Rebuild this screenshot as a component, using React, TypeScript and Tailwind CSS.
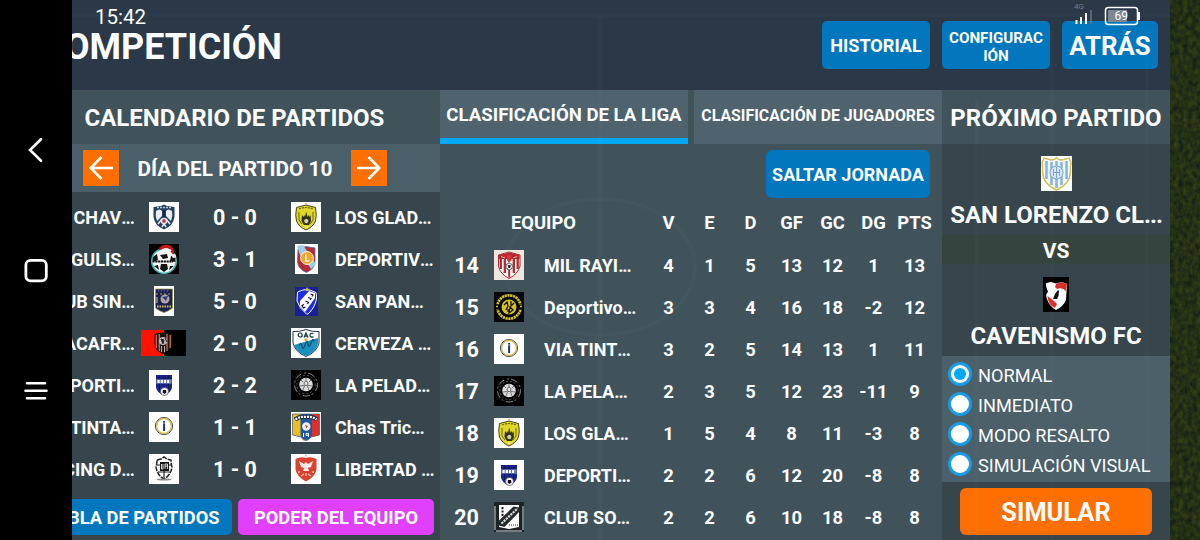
import React from "react";

type CrestName =
  | "chav" | "santa" | "sin" | "bacafr" | "deportivo" | "tinta" | "racing"
  | "glad" | "lanus" | "sanpan" | "oac" | "pelada" | "chas" | "libertad"
  | "rayi" | "dorado" | "solis" | "lorenzo" | "caven";

function Art({ name }: { name: CrestName }) {
  switch (name) {
    case "chav":
      return (
        <>
          <rect width="30" height="30" fill="#fff" />
          <path d="M15 2.500 L18 4 L25.500 5 V15 Q24 24 15 27.500 Q6 24 4.500 15 V5 L12 4 Z" fill="#24405f" />
          <path d="M7 9 Q11 6 13 9 V14 L8 19 Q6 14 7 9 Z M23 9 Q19 6 17 9 V14 L22 19 Q24 14 23 9 Z" fill="#e8eef2" />
          <path d="M8 5.500 H22" stroke="#b9c9d6" strokeWidth="1.500" strokeDasharray="2 1" />
          <path d="M9 22 L13 17 M21 22 L17 17 M13 25 L15 22 L17 25" stroke="#e5eaf0" strokeWidth="1.600" />
          <circle cx="15" cy="19" r="3.200" fill="#e8eef2" />
          <circle cx="15" cy="19" r="1.900" fill="#c63a4c" />
          <path d="M14 8 H16 V15 H14 Z" fill="#16293f" />
        </>
      );
    case "santa":
      return (
        <>
          <rect width="30" height="30" fill="#050505" />
          <circle cx="15" cy="17" r="12.300" fill="#f5f5f5" stroke="#3cb7b0" strokeWidth="1.600" />
          <path d="M11 11 L18 10 L19 14 L14 15 Z M4 13 L8 10 L9 16 L3.500 18 Z M26 13 L22 12 L21 17 L26.500 18 Z M12 20 L18 20 L19 25 L15 28 L11 25 Z M5 22 L9 21 L10 26 Z M25 22 L21 22 L20 26 Z" fill="#151515" />
          <path d="M3.500 17.500 H24" stroke="#111" strokeWidth="2" strokeDasharray="2.200 .6" />
          <path d="M10 6 Q13 0 20 1 Q26 3 25 12 L22 8 Q16 3 10 8 Z" fill="#c4161c" />
          <path d="M10 8 Q16 3 22 7" stroke="#fff" strokeWidth="2.200" fill="none" />
          <path d="M11 5 Q16 0 22 4" stroke="#c4161c" strokeWidth="3" fill="none" />
          <circle cx="25" cy="12" r="2" fill="#eee" />
        </>
      );
    case "sin":
      return (
        <>
          <rect width="20" height="30" fill="#fff" />
          <path d="M1.500 3 H18.500 V22 Q15 25 10 26.500 Q5 25 1.500 22 Z" fill="#1b2250" stroke="#9b9a50" strokeWidth=".8" />
          <path d="M2 8 H18" stroke="#d5c94b" strokeWidth=".8" strokeDasharray="2 2" />
          <circle cx="11" cy="13" r="4.500" fill="#b3a5a0" />
          <path d="M8 11 L14 10 L12 15 Z" fill="#2d3a90" />
          <path d="M3 20.500 H17" stroke="#d5c94b" strokeWidth="2" strokeDasharray="1.500 1" />
          <path d="M4 5 H16" stroke="#7585b8" strokeWidth="1.200" strokeDasharray="1 2" />
          <path d="M3 11 V17" stroke="#e0d66a" strokeWidth="1" />
        </>
      );
    case "bacafr":
      return (
        <>
          <rect width="45" height="26" fill="#000" />
          <rect width="23" height="26" fill="#ff1200" />
          <path d="M13.500 4 Q22 1 31 4 V14 Q30 21 22 24 Q14 21 13.500 14 Z" fill="#181818" />
          <path d="M15.300 5 V18 M18.300 4 V21 M26 4 V21 M29.200 5 V18" stroke="#cf6a60" strokeWidth="1.300" />
          <circle cx="22" cy="11" r="4" fill="#bbb" />
          <path d="M20 9 L23 10 L22 14 Z M24 8 L26 12" stroke="#222" fill="#222" />
          <path d="M20.500 16 V22 M23.500 16 V22" stroke="#c2b0a5" strokeWidth="1" />
        </>
      );
    case "deportivo":
      return (
        <>
          <rect width="30" height="30" fill="#fff" />
          <path d="M7 5 H23 V17 Q23 22 15 25.500 Q7 22 7 17 Z" fill="#1a2590" />
          <path d="M10.500 5 V20 M15 5 V20 M19.500 5 V20 M7 8 H23" stroke="#10174f" strokeWidth=".9" />
          <rect x="7" y="9" width="16" height="5" fill="#5064ae" />
          <path d="M8.500 11.500 H21.500" stroke="#fff" strokeWidth="2.800" strokeDasharray="2.200 1" />
          <circle cx="15.500" cy="21.500" r="4" fill="#fff" stroke="#333" strokeWidth=".6" />
          <path d="M14 20 L17 20 L17.500 22.500 L15.500 24 L13.500 22.500 Z" fill="#111" />
        </>
      );
    case "tinta":
      return (
        <>
          <rect width="30" height="30" fill="#fefefe" />
          <circle cx="15" cy="14" r="8.500" fill="#fff" stroke="#263341" strokeWidth="1" />
          <circle cx="15" cy="14" r="7.500" fill="none" stroke="#d8b951" strokeWidth="1.400" />
          <rect x="14.100" y="9" width="2" height="10" fill="#173a67" />
          <path d="M14.100 11 H16" stroke="#fff" strokeWidth=".7" />
        </>
      );
    case "racing":
      return (
        <>
          <rect width="30" height="30" fill="#fff" />
          <path d="M8 6 L12 5 L15 3 L18 5 L22 6 Q22 10 23 13 Q22 21 15 25 Q8 21 7 13 Q8 10 8 6 Z" fill="none" stroke="#222" strokeWidth="1.500" strokeDasharray="5 1" />
          <rect x="11" y="8" width="9" height="9" fill="#161616" />
          <path d="M12.500 10 V15 H14 V10 M16 15 V10 H18.500 V12 H16 M18.500 12 V15" stroke="#fff" strokeWidth=".8" fill="none" />
          <path d="M8 11 H11 M20 11 H23 M9 18 H21 M15 17 V24" stroke="#222" strokeWidth="1.200" />
          <ellipse cx="15" cy="25.500" rx="7.500" ry="1.100" fill="#888" />
        </>
      );
    case "glad":
      return (
        <>
          <rect width="30" height="30" fill="#fff" />
          <path d="M15 3 L24.500 5.500 Q26 14 24.500 19 Q22 25 15 28 Q8 25 5.500 19 Q4 14 5.500 5.500 Z" fill="#e0d829" stroke="#44441a" strokeWidth="1" />
          <path d="M8 7 Q15 4 22 7" stroke="#63601c" strokeWidth="1.200" fill="none" strokeDasharray="2 1" />
          <path d="M8 10 V18 L11 22 M22 10 V18 L19 22" stroke="#6d691a" strokeWidth="1" fill="none" />
          <path d="M10.500 19 L11 13 L12.500 15 L13.500 13 L14 15 L15.200 9.500 L16.500 15 L17.500 13 L18.500 15 L19.500 13 L20 19 L18 23 H13 Z" fill="#33321b" />
          <circle cx="15.300" cy="19" r="2.600" fill="#d5d4ae" stroke="#222" strokeWidth=".8" />
          <path d="M14 25 H17" stroke="#fff58a" strokeWidth="1.300" />
          <circle cx="15" cy="1.600" r=".8" fill="#e59a45" />
        </>
      );
    case "lanus":
      return (
        <>
          <rect width="23" height="30" fill="#fff" />
          <path d="M3 5 L11 2.500 L20 4 V17 Q20 25 11.500 28.500 Q3 25 2.500 18 Z" fill="#b52b38" stroke="#4c6fae" strokeWidth=".8" />
          <path d="M2 2 L8 1 L21 20 L16 25 L11 17 L5 11 Z" fill="#9fcbe3" />
          <circle cx="12" cy="14" r="6.400" fill="#efa62b" stroke="#fff4df" strokeWidth="1" />
          <path d="M10.800 10.500 V17 H14.500" stroke="#fff" strokeWidth="1.400" fill="none" />
        </>
      );
    case "sanpan":
      return (
        <>
          <rect width="23" height="29" fill="#182099" />
          <path d="M2.500 5 Q8 2.500 11.500 2.500 Q16 3 21 5.500 Q23 13 18 21 Q15 26 12 27.500 Q4 21 2 14 Z" fill="#1f2fdb" stroke="#fff" strokeWidth="1" />
          <path d="M14 4 L20 6 L20 11 L10 25 L5 19 V14 Z" fill="#fff" />
          <path d="M15.500 7 L18 8 L17 9.500 M13 10.500 L16 11.500 L15 13 M10.500 14 L13.500 15.500 L12.500 17 M9 17.500 L7 18.500 L8.500 21 L10.500 20" stroke="#10103c" strokeWidth="1.200" fill="none" />
          <path d="M12 0 L13 1.800 L15 2 L13 3.500 L12 4 L10.500 3.500 L9.500 2 L11.200 1.800 Z" fill="#d6c646" />
        </>
      );
    case "oac":
      return (
        <>
          <rect width="30" height="30" fill="#fff" />
          <path d="M15 1.500 Q21 4 28 3.500 V15 Q26 24 15 28.500 Q4 24 2 15 V3.500 Q9 4 15 1.500 Z" fill="#fff" stroke="#22374c" strokeWidth="1" />
          <path d="M3 17 L27 10 V15 Q26 23.500 15 28 Q5 24 3 17 Z" fill="#1a8fc0" />
          <g fill="none" stroke="#15333f" strokeWidth="1.200">
            <circle cx="9.200" cy="7" r="2" />
            <path d="M13 9.500 L15 5 L17 9.500 M13.800 8.200 H16.200 M22.500 5.500 Q19 4.600 19 7.200 Q19 9.700 22.500 8.900" />
          </g>
          <rect x="13.500" y="10.500" width="3" height="2.500" fill="#d9a63d" />
          <path d="M8 17.500 Q10 13 11 18 T14 17 T17 16 T20 15 T23 13.500" stroke="#155272" strokeWidth="1.300" fill="none" />
        </>
      );
    case "pelada":
      return (
        <>
          <rect width="30" height="30" fill="#020202" />
          <circle cx="15" cy="14.500" r="11.500" fill="none" stroke="#8c8c8c" strokeWidth="1" strokeDasharray="7 3 2 2" />
          <circle cx="15" cy="14.500" r="9.200" fill="none" stroke="#555" strokeWidth="1" strokeDasharray="2 2" />
          <circle cx="15" cy="14.500" r="6.800" fill="#dcdcdc" />
          <path d="M13 12.500 L15 11 L17 12.500 L16.500 15.500 H13.500 Z M10 10 L12 12 M20 10 L18 12 M15 8 V11 M9 16 L13 15.500 M21 16 L17 15.500 M12 20 L13.500 16 M18 20 L16.500 16" fill="none" stroke="#555" strokeWidth=".8" />
        </>
      );
    case "chas":
      return (
        <>
          <rect width="30" height="30" fill="#fff" />
          <path d="M1.500 2 H28.500 V23 L20 25 Q17 29 15 28.500 Q12 29 10 25 L1.500 23 Z" fill="#e9bf25" stroke="#46536e" strokeWidth=".7" />
          <path d="M21 2 H28.500 V23 L21 25 Z" fill="#d7322e" />
          <path d="M9.500 2 H21 V24 Q18 28 15 28 Q12 28 9.500 24 Z" fill="#1f5aa0" />
          <path d="M4 7.500 Q9 4 15 5 Q21 4 26 7.500" stroke="#22344a" strokeWidth="4.400" fill="none" />
          <path d="M4.500 7.500 Q9 4 15 5 Q21 4 25.500 7.500" stroke="#fff" strokeWidth="2.200" fill="none" strokeDasharray="2 1" />
          <circle cx="15.300" cy="14.500" r="4.200" fill="#eee" />
          <path d="M14 13 L17 14 L15.500 16.500 Z" fill="#b54040" />
          <path d="M12.500 21 V25 M15 21.500 H17.500 V25 M15 21.500 V23.300 H17.500" stroke="#fff" strokeWidth="1" fill="none" />
        </>
      );
    case "libertad":
      return (
        <>
          <rect width="30" height="30" fill="#fff" />
          <path d="M4.500 5 Q10 2 15 4 Q20 2 25.500 5 V15 Q25 22 15 27.500 Q5 22 4.500 15 Z" fill="#d9432f" />
          <path d="M8 7 L13 10 L15 8 L17 10 L22 7 L20 13 L17 14 L18 17 H12 L13 14 L10 13 Z" fill="#ffe9e3" />
          <circle cx="8" cy="18" r="1" fill="#f3c3b8" />
          <circle cx="22" cy="18" r="1" fill="#f3c3b8" />
          <path d="M10 22 L13 20 M20 22 L17 20 M15 19 V22" stroke="#f3c3b8" strokeWidth="1.200" />
          <circle cx="15" cy="1.600" r=".9" fill="#e9a08c" />
        </>
      );
    case "rayi":
      return (
        <>
          <rect width="30" height="30" fill="#efe7de" />
          <path d="M4.500 5 L15 2 L26 5 V16 Q24 24 15 28.500 Q6 24 4.500 16 Z" fill="#fff" stroke="#a82a31" strokeWidth="1" />
          <path d="M5 5 L15 2.500 L25.500 5 V9 H5 Z" fill="#b8262e" />
          <path d="M6.800 9 V19 M10.800 9 V23 M19.800 9 V23 M23.700 9 V19" stroke="#b8262e" strokeWidth="2.300" />
          <path d="M15.200 20 V27.500" stroke="#b8262e" strokeWidth="2" />
          <path d="M13 5 H17.500 V10 L15 13 L13 10 Z" fill="#d8313a" />
          <path d="M7 6.500 L11 8 M23 6.500 L19 8" stroke="#e9b9ad" strokeWidth="1" />
          <circle cx="15.200" cy="16.500" r="3.300" fill="#eee" stroke="#222" strokeWidth=".6" />
          <path d="M14.200 15.500 H16.300 L15.900 17.500 H14.600 Z M12.800 14.500 L13.400 14 M17.800 14.400 L17.300 13.900 M13 18.700 H13.700 M17 18.700 H17.600" fill="#111" stroke="#111" strokeWidth=".7" />
        </>
      );
    case "dorado":
      return (
        <>
          <rect width="30" height="30" fill="#070707" />
          <circle cx="15" cy="15" r="11.700" fill="none" stroke="#d6c127" strokeWidth="2.700" strokeDasharray="2.200 .6" />
          <path d="M1.500 15 H5 M25 15 H28.500" stroke="#070707" strokeWidth="5" />
          <path d="M2 14.500 H4 M26 14.500 H28" stroke="#d6c127" strokeWidth="1.300" />
          <circle cx="15" cy="15" r="7.500" fill="#d6c127" />
          <path d="M10 13 L13 10 L14 14 L12 18 M17 9 V14 L20 11 M16 15 L19 18 L15 21 Z M14 17 V20" stroke="#161506" strokeWidth="1.300" fill="none" />
        </>
      );
    case "solis":
      return (
        <>
          <rect width="30" height="30" fill="#1d2224" />
          <path d="M1 4 V28 M29 4 V28 M2 29 H28" stroke="#d2d8d9" strokeWidth="1" />
          <path d="M5 3 H25 V25 L20 26 L15 27 L5 25 Z" fill="#fff" />
          <path d="M4.500 19 L19.500 4.500 L25.500 5.500 V9.500 L10.500 25 L5 23.500 Z" fill="#24292a" />
          <path d="M7.500 21.500 L23.500 6.500" stroke="#dce0df" strokeWidth="2.100" strokeDasharray="2.200 .9" />
          <path d="M8.500 5 V14" stroke="#222" strokeWidth="2" strokeDasharray="2.200 1.200" />
          <path d="M15 23 H24" stroke="#333" strokeWidth="1.200" strokeDasharray="1 1" />
        </>
      );
    case "lorenzo":
      return (
        <>
          <rect width="31" height="35" fill="#fff" />
          <path d="M15.500 1.500 Q17 4 21 4 L28 2 L30 7 Q29 11 29.500 16 Q29 28 15.500 34 Q2 28 1.500 16 Q2 11 1 7 L3 2 L10 4 Q14 4 15.500 1.500 Z" fill="#f4f8fb" />
          <path d="M5.500 5 V23 M10.500 6 V29 M20.500 6 V29 M25.500 5 V23 M15.500 5 V32" stroke="#86b2e0" strokeWidth="2.500" />
          <path d="M15.500 1.500 Q17 4 21 4 L28 2 L30 7 Q29 11 29.500 16 Q29 28 15.500 34 Q2 28 1.500 16 Q2 11 1 7 L3 2 L10 4 Q14 4 15.500 1.500 Z" fill="none" stroke="#d5bd4f" strokeWidth="1.400" />
          <circle cx="15.500" cy="16.500" r="6.500" fill="#dbe8f4" stroke="#7aaee0" strokeWidth="1.100" />
          <path d="M12.500 13 V20 M18.500 13 V20 M12.500 16.500 H18.500 M15.500 11 V22" stroke="#7ba6d4" strokeWidth="1" />
        </>
      );
    case "caven":
      return (
        <>
          <rect width="26" height="35" fill="#000" />
          <path d="M3 6 L8 5 L13 6.500 L19 5 L24 7 L23 23 Q20 30 13 33 Q6 29 4 22 Q2 17 5 15 L3 9 Z" fill="#fff" />
          <path d="M13 7 L19 5 L24 7 L23 14 Q19 10 14 12 L12 10 Z" fill="#d92f29" />
          <path d="M4.500 19 L11 24 L14 27 L12 31 Q5 28 4.500 19 Z" fill="#d92f29" />
          <path d="M15 13 L16 14 L15.500 19 L14 22 H10 L12 17 Z" fill="#111" />
        </>
      );
  }
}

const SIZES: Partial<Record<CrestName, [number, number]>> = {
  sin: [20, 30],
  bacafr: [45, 26],
  lanus: [23, 30],
  sanpan: [23, 29],
  lorenzo: [31, 35],
  caven: [26, 35],
};

function Crest({ name }: { name: CrestName }) {
  const [w, h] = SIZES[name] ?? [30, 30];
  return (
    <svg width={w} height={h} viewBox={`0 0 ${w} ${h}`} className="block shrink-0" aria-hidden="true">
      <Art name={name} />
    </svg>
  );
}

function Clipped({ text }: { text: string }) {
  return (
    <span className="shrink-0 pt-[2px] text-[18px] whitespace-nowrap">
      {text}
      <span className="tracking-[-1px]">...</span>
    </span>
  );
}

type Match = { home: string; homeCrest: CrestName; score: string; awayCrest: CrestName; away: string };

const matches: Match[] = [
  { home: "CHAV", homeCrest: "chav", score: "0 - 0", awayCrest: "glad", away: "LOS GLAD" },
  { home: "GULIS", homeCrest: "santa", score: "3 - 1", awayCrest: "lanus", away: "DEPORTIV" },
  { home: "UB SIN", homeCrest: "sin", score: "5 - 0", awayCrest: "sanpan", away: "SAN PAN" },
  { home: "ACAFR", homeCrest: "bacafr", score: "2 - 0", awayCrest: "oac", away: "CERVEZA " },
  { home: "PORTI", homeCrest: "deportivo", score: "2 - 2", awayCrest: "pelada", away: "LA PELAD" },
  { home: "TINTA", homeCrest: "tinta", score: "1 - 1", awayCrest: "chas", away: "Chas Tric" },
  { home: "CING D", homeCrest: "racing", score: "1 - 0", awayCrest: "libertad", away: "LIBERTAD " },
];

type Standing = { pos: number; crest: CrestName; team: string; stats: number[] };

const standings: Standing[] = [
  { pos: 14, crest: "rayi", team: "MIL RAYI", stats: [4, 1, 5, 13, 12, 1, 13] },
  { pos: 15, crest: "dorado", team: "Deportivo", stats: [3, 3, 4, 16, 18, -2, 12] },
  { pos: 16, crest: "tinta", team: "VIA TINT", stats: [3, 2, 5, 14, 13, 1, 11] },
  { pos: 17, crest: "pelada", team: "LA PELA", stats: [2, 3, 5, 12, 23, -11, 9] },
  { pos: 18, crest: "glad", team: "LOS GLA", stats: [1, 5, 4, 8, 11, -3, 8] },
  { pos: 19, crest: "deportivo", team: "DEPORTI", stats: [2, 2, 6, 12, 20, -8, 8] },
  { pos: 20, crest: "solis", team: "CLUB SO", stats: [2, 2, 6, 10, 18, -8, 8] },
];

const modes = ["NORMAL", "INMEDIATO", "MODO RESALTO", "SIMULACIÓN VISUAL"];

function Arrow({ flip = false }: { flip?: boolean }) {
  return (
    <button className="flex h-9 w-9 items-center justify-center bg-[#ff6f00]">
      <svg width="24" height="24" viewBox="0 0 24 24" fill="none" stroke="#fff" strokeWidth="2.600" className={flip ? "rotate-180" : ""}>
        <path d="M12.500 1 L1.800 12 L12.500 23 M2 12 H24" />
      </svg>
    </button>
  );
}

function SystemBar() {
  return (
    <nav className="flex h-full w-[72px] shrink-0 flex-col items-center bg-black pt-[135px]">
      <svg width="20" height="30" viewBox="0 0 20 30" fill="none" stroke="#fff" strokeWidth="2.600" strokeLinecap="round">
        <path d="M15 4.200 L4 15 L15 25.800" />
      </svg>
      <svg width="26" height="26" viewBox="0 0 26 26" className="mt-[93px]" fill="none" stroke="#fff" strokeWidth="2.800">
        <rect x="2.900" y="2.400" width="20.400" height="20.400" rx="4.500" />
      </svg>
      <svg width="24" height="20" viewBox="0 0 24 20" className="mt-[97px]" stroke="#fff" strokeWidth="2.600" strokeLinecap="round">
        <path d="M3 2.200 H21 M1.500 9.700 H22.500 M3 17.200 H21" />
      </svg>
    </nav>
  );
}

function Schedule() {
  return (
    <section className="flex w-[368px] shrink-0 flex-col bg-[#37454c]">
      <h2 className="flex h-[54px] shrink-0 items-center bg-[#40535a] pt-[2px] pl-[12.500px] text-2xl leading-none font-bold">
        CALENDARIO DE PARTIDOS
      </h2>
      <div className="flex h-12 shrink-0 items-center justify-between bg-[#4a5f68] pr-[53px] pl-[11px]">
        <Arrow />
        <span className="pt-[2px] text-[20.800px] font-bold">DÍA DEL PARTIDO 10</span>
        <Arrow flip />
      </div>
      <div className="h-[298px] shrink-0 pt-1">
        {matches.map((m) => (
          <div key={m.home} className="flex h-[42px] items-center font-bold">
            <div className="flex w-[62px] shrink-0 justify-end overflow-hidden">
              <Clipped text={m.home} />
            </div>
            <div className="flex w-[59px] shrink-0 justify-center"><Crest name={m.homeCrest} /></div>
            <div className="w-[84px] shrink-0 pt-[2px] text-center text-[21.500px]">{m.score}</div>
            <div className="flex w-[58px] shrink-0 justify-center"><Crest name={m.awayCrest} /></div>
            <Clipped text={m.away} />
          </div>
        ))}
      </div>
      <div className="flex flex-1 items-start gap-1.5 pt-[9px] text-[18.300px] font-bold">
        <button className="flex h-9 w-[160px] shrink-0 items-center justify-end overflow-hidden rounded-r-[5px] bg-[#0277bd] pt-[2px] pr-[12.500px] whitespace-nowrap">
          TABLA DE PARTIDOS
        </button>
        <button className="flex h-9 w-[196px] items-center justify-center rounded-[5px] bg-[#e040fb] pt-[2px]">PODER DEL EQUIPO</button>
      </div>
    </section>
  );
}

function League() {
  return (
    <section className="flex w-[502px] shrink-0 flex-col bg-[#40535b]">
      <div className="flex h-[54px] shrink-0 gap-1.5 font-bold">
        <div className="flex w-[248px] shrink-0 items-center justify-center border-b-[6px] border-[#03a9f4] bg-[#4e636d] pt-[3px] text-[18.600px] whitespace-nowrap">
          CLASIFICACIÓN DE LA LIGA
        </div>
        <div className="flex flex-1 items-center justify-center bg-[#4e636d] pb-[3px] text-[15.850px] whitespace-nowrap">
          CLASIFICACIÓN DE JUGADORES
        </div>
      </div>
      <div className="flex shrink-0 justify-end pt-1.5 pr-3">
        <button className="h-12 w-[164px] rounded-md bg-[#0277bd] pt-[2px] text-[18px] font-bold">SALTAR JORNADA</button>
      </div>
      <div className="flex h-[46px] shrink-0 items-center pt-[4px] text-[18.400px] font-bold">
        <div className="w-[208px] shrink-0 pr-[1px] text-center">EQUIPO</div>
        <div className="grid w-[287px] grid-cols-7 text-center">
          {["V", "E", "D", "GF", "GC", "DG", "PTS"].map((c) => <span key={c}>{c}</span>)}
        </div>
      </div>
      {standings.map((s) => (
        <div key={s.pos} className="flex h-[42px] shrink-0 items-center text-[18.400px] font-bold">
          <div className="w-[54px] shrink-0 pt-[2px] pr-px text-center text-[21.500px]">{s.pos}</div>
          <Crest name={s.crest} />
          <div className="flex w-[124px] shrink-0 pl-5"><Clipped text={s.team} /></div>
          <div className="grid w-[287px] grid-cols-7 pt-[2px] text-center">
            {s.stats.map((v, i) => <span key={i}>{v}</span>)}
          </div>
        </div>
      ))}
    </section>
  );
}

function NextMatch() {
  return (
    <section className="flex w-[228px] shrink-0 flex-col bg-[#37454c]">
      <h2 className="flex h-[54px] shrink-0 items-center justify-center bg-[#40535a] pt-[2px] text-2xl leading-none font-bold">
        PRÓXIMO PARTIDO
      </h2>
      <div className="flex h-[212px] shrink-0 flex-col items-center pt-3 text-[24px] font-bold">
        <Crest name="lorenzo" />
        <div className="flex h-11 shrink-0 items-center pt-[4px] whitespace-nowrap">
          <span>SAN LORENZO CL<span className="tracking-[-1px]">...</span></span>
        </div>
        <div className="flex h-[29px] w-full shrink-0 items-center justify-center bg-[#36443f] pt-[3px] text-[21px]">VS</div>
        <div className="shrink-0 pt-[13px]"><Crest name="caven" /></div>
        <div className="flex h-11 shrink-0 items-center pt-[4px]">CAVENISMO FC</div>
      </div>
      <div className="flex h-[126px] shrink-0 flex-col bg-[#4b6069] pt-[3px] pl-1.5">
        {modes.map((m, i) => (
          <label key={m} className="flex h-[30px] items-center gap-1.5 text-[18.200px]">
            <span className="flex h-6 w-6 items-center justify-center rounded-full bg-[#1a9be6]">
              <span className="flex h-[18px] w-[18px] items-center justify-center rounded-full bg-white">
                {i === 0 && <span className="h-3 w-3 rounded-full bg-[#03a9f4]" />}
              </span>
            </span>
            <span className="pt-[4px]">{m}</span>
          </label>
        ))}
      </div>
      <div className="flex flex-1 justify-center pt-1.5">
        <button className="h-[47px] w-[192px] rounded-md bg-[#ff6f00] pt-[2px] text-[25.400px] font-bold">SIMULAR</button>
      </div>
    </section>
  );
}

export default function App() {
  return (
    <div className="relative flex h-[540px] w-[1200px] overflow-hidden bg-[#2b3848] font-['Roboto',sans-serif] leading-none text-[#fafcfd]">
      <SystemBar />
      <main className="flex w-[1098px] shrink-0 flex-col overflow-hidden">
        <header className="flex h-[90px] shrink-0 justify-between pr-3">
          <div className="flex w-[210px] justify-end overflow-hidden pt-[29px]">
            <h1 className="shrink-0 text-[36px] leading-none font-bold">COMPETICIÓN</h1>
          </div>
          <div className="flex gap-3 pt-[21px] font-bold">
            <button className="h-12 w-[108px] rounded-[5px] bg-[#0277bd] pt-[2px] text-[18.100px]">HISTORIAL</button>
            <button className="h-12 w-[108px] rounded-[5px] bg-[#0277bd] pt-[4px] text-[15.200px] leading-[18px]">CONFIGURAC<br />IÓN</button>
            <button className="h-12 w-24 rounded-[5px] bg-[#0277bd] pt-[3px] text-[25.800px]">ATRÁS</button>
          </div>
        </header>
        <div className="flex min-h-0 flex-1">
          <Schedule />
          <League />
          <NextMatch />
        </div>
      </main>
      <svg width="30" height="540" className="shrink-0" aria-hidden="true">
        <filter id="grass" x="0" y="0" width="100%" height="100%" colorInterpolationFilters="sRGB">
          <feTurbulence type="fractalNoise" baseFrequency=".22 .16" numOctaves="3" seed="4" />
          <feColorMatrix values=".2 0 0 0 .04  .2 0 0 0 .09  0 .06 0 0 .05  0 0 0 0 1" />
        </filter>
        <rect width="30" height="540" fill="#24311a" />
        <rect width="30" height="540" filter="url(#grass)" />
      </svg>
      <svg width="1098" height="540" className="pointer-events-none absolute top-0 left-[72px]" fill="none" stroke="#9fc3c3" strokeOpacity=".025" strokeWidth="4" aria-hidden="true">
        <path d="M0 15 H1098 M528 15 V540 M905 100 V540 M980 30 V540 M1075 30 V540" />
        <ellipse cx="528" cy="267" rx="95" ry="68" />
      </svg>
      <div className="absolute top-[7px] left-[95px] text-[20.500px]">15:42</div>
      <svg width="70" height="26" viewBox="1072 0 70 26" className="absolute top-0 left-[1072px]" aria-hidden="true">
        <text x="1074" y="8.500" fontSize="8" fill="#737c88" fontFamily="Roboto">4G</text>
        <path d="M1076.500 20 V24 M1081 17 V24 M1086 13 V24" stroke="#fff" strokeWidth="2" />
        <path d="M1091 10 V24" stroke="#66758a" strokeWidth="1.500" />
        <rect x="1105.500" y="7.500" width="32" height="17" rx="3" fill="none" stroke="#fff" strokeWidth="1.500" />
        <rect x="1108" y="10" width="19" height="12" fill="#7d8793" />
        <rect x="1138" y="12" width="2" height="8" fill="#fff" />
        <text x="1121.300" y="20.200" fontSize="12" fill="#fff" fontFamily="Roboto" textAnchor="middle">69</text>
      </svg>
    </div>
  );
}
